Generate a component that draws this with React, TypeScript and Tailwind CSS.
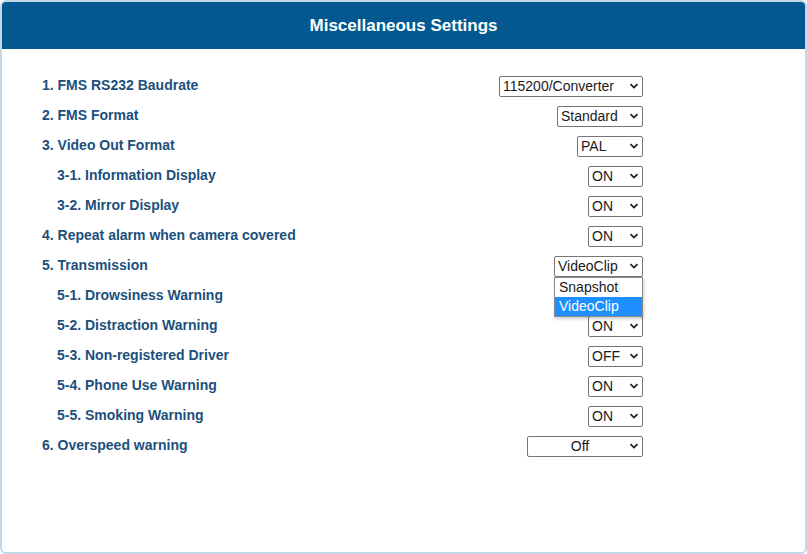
import React from 'react';

type Row = {
  label: string;
  sub?: boolean;
  value: string;
  width: string;
  center?: boolean;
  open?: boolean;
  covered?: boolean;
};

const rows: Row[] = [
  { label: '1. FMS RS232 Baudrate', value: '115200/Converter', width: 'w-[144px]' },
  { label: '2. FMS Format', value: 'Standard', width: 'w-[86px]' },
  { label: '3. Video Out Format', value: 'PAL', width: 'w-[66px]' },
  { label: '3-1. Information Display', sub: true, value: 'ON', width: 'w-[55px]' },
  { label: '3-2. Mirror Display', sub: true, value: 'ON', width: 'w-[55px]' },
  { label: '4. Repeat alarm when camera covered', value: 'ON', width: 'w-[55px]' },
  { label: '5. Transmission', value: 'VideoClip', width: 'w-[89px]', open: true },
  { label: '5-1. Drowsiness Warning', sub: true, value: 'ON', width: 'w-[55px]', covered: true },
  { label: '5-2. Distraction Warning', sub: true, value: 'ON', width: 'w-[55px]' },
  { label: '5-3. Non-registered Driver', sub: true, value: 'OFF', width: 'w-[55px]' },
  { label: '5-4. Phone Use Warning', sub: true, value: 'ON', width: 'w-[55px]' },
  { label: '5-5. Smoking Warning', sub: true, value: 'ON', width: 'w-[55px]' },
  { label: '6. Overspeed warning', value: 'Off', width: 'w-[116px]', center: true },
];

const Chevron = () => (
  <svg width="10" height="10" viewBox="0 0 10 10" className="shrink-0">
    <path d="M1.5 3.2 L5 6.6 L8.5 3.2" fill="none" stroke="#222" strokeWidth="1.8" />
  </svg>
);

const FakeSelect: React.FC<{ row: Row }> = ({ row }) => (
  <div className="relative">
    <div
      className={`${row.width} h-[21px] flex items-center border border-[#767676] rounded-[2px] bg-white pl-[3px] pr-[3px] text-[14px] text-[#1a1a1a] leading-none`}
    >
      {/* the open dropdown above lies over this value */}
      <span className={`flex-1 whitespace-nowrap ${row.center ? 'text-center' : ''} ${row.covered ? 'invisible' : ''}`}>
        {row.value}
      </span>
      <Chevron />
    </div>
    {row.open && (
      <div className="absolute left-0 top-[21px] w-[89px] border border-[#8a8a8a] bg-white shadow-[1px_2px_3px_rgba(0,0,0,0.2)] z-10 text-[14px]">
        <div className="h-[19px] flex items-center pl-[4px] text-[#1a1a1a]">Snapshot</div>
        <div className="h-[19px] flex items-center pl-[4px] bg-[#1e8fff] text-white">VideoClip</div>
      </div>
    )}
  </div>
);

export default function App() {
  return (
    <div className="w-[807px] h-[554px] bg-white font-['Liberation_Sans',Arial,sans-serif]">
      <div className="h-full border-2 border-[#c4d7e7] rounded-md overflow-hidden flex flex-col">
        <div className="h-[47px] bg-[#03598f] flex items-center justify-center shrink-0">
          <h1 className="text-white font-bold text-[17px]">Miscellaneous Settings</h1>
        </div>
        <div className="pt-[22px] pl-[40px] w-[641px]">
          {rows.map((row) => (
            <div key={row.label} className="h-[30px] flex items-center justify-between">
              <span
                className={`text-[14px] font-bold text-[#1c4f7c] ${row.sub ? 'pl-[15px]' : ''} -mt-[2px]`}
              >
                {row.label}
              </span>
              <FakeSelect row={row} />
            </div>
          ))}
        </div>
      </div>
    </div>
  );
}
